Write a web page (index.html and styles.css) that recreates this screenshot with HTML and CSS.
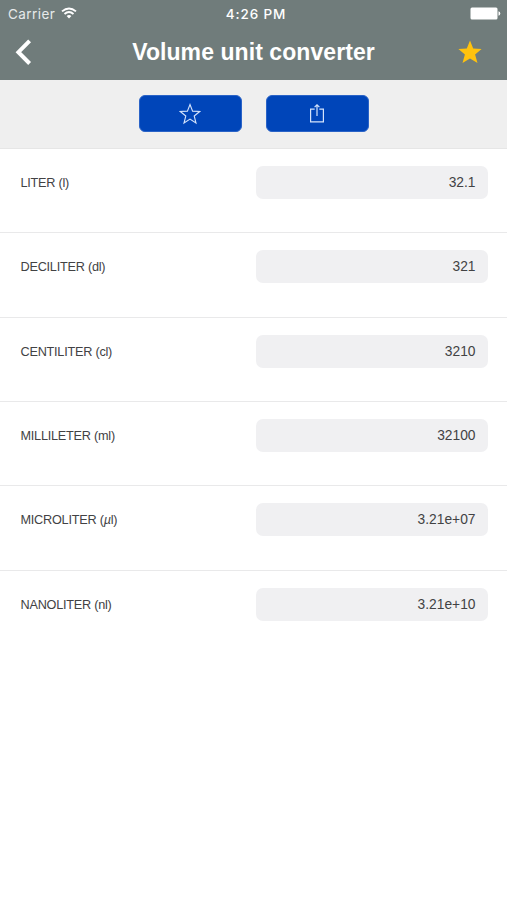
FILE: index.html
```html
<!DOCTYPE html>
<html lang="en">
<head>
<meta charset="utf-8">
<title>Volume unit converter</title>
<link rel="stylesheet" href="styles.css">
</head>
<body>
<header class="header">
  <div class="status">
    <div class="carrier"><span>Carrier</span>
      <svg class="wifi" width="16" height="12" viewBox="0 0 16 12" fill="none" stroke="#fff" stroke-width="1.9"><path d="M1 4.4Q8-1.6 15 4.4M3.5 7Q8 3.2 12.5 7"/><path d="M5.6 9Q8 7 10.4 9L8 11.5Z" fill="#fff" stroke="none"/></svg>
    </div>
    <time class="time">4:26 PM</time>
    <svg class="battery" width="31" height="13" viewBox="0 0 31 13" fill="#fff"><rect x=".5" y=".5" width="27" height="12" rx="1.5"/><path d="M28.5 4.3Q30.3 4.8 30.3 6.5T28.5 8.7Z"/></svg>
  </div>
  <nav class="nav">
    <svg class="back" width="18" height="28" viewBox="0 0 18 28" fill="none" stroke="#fff" stroke-width="4"><path d="M15.6 2.9L4.4 14.2L15.6 25.5"/></svg>
    <h1 class="title">Volume unit converter</h1>
    <svg class="favorite" width="24" height="24" viewBox="0 0 24 24" fill="#ffc20e"><path d="M12 .5L15.2 8.4L23.6 9L17.1 14.5L19.5 23L12 18.6L4.5 23L6.9 14.5L.4 9L8.8 8.4Z"/></svg>
  </nav>
</header>
<div class="toolbar">
  <button class="action" aria-label="Favorite"><svg width="22" height="22" viewBox="0 0 22 22" fill="none" stroke="#d4e3fb" stroke-width="1.1"><path d="M11 1.5L13.6 8.1L20.7 8.5L15.2 13L17 20L11 16.1L5 20L6.8 13L1.3 8.5L8.4 8.1Z"/></svg></button>
  <button class="action" aria-label="Share"><svg width="18" height="22" viewBox="0 0 18 22" fill="none" stroke="#d4e3fb" stroke-width="1.2"><path d="M6.7 6.2H2.6V18.8H15.4V6.2H11.3M9 13V2M6.6 4.2L9 1.8L11.4 4.2"/></svg></button>
</div>
<main class="units">
  <div class="row"><span class="label">LITER (l)</span><span class="value">32.1</span></div>
  <div class="row"><span class="label">DECILITER (dl)</span><span class="value">321</span></div>
  <div class="row"><span class="label">CENTILITER (cl)</span><span class="value">3210</span></div>
  <div class="row"><span class="label">MILLILETER (ml)</span><span class="value">32100</span></div>
  <div class="row"><span class="label">MICROLITER (<i class="mu">µ</i>l)</span><span class="value">3.21e+07</span></div>
  <div class="row"><span class="label">NANOLITER (nl)</span><span class="value">3.21e+10</span></div>
</main>
</body>
</html>
```
FILE: styles.css
```css
* { box-sizing: border-box; }
body {
  margin: 0;
  min-height: 900px;
  background: #fff;
  color: #424244;
  font-family: "Liberation Sans", Arial, sans-serif;
}
.header {
  height: 80px;
  background: #707c7b;
  color: #fff;
}
.status {
  display: grid;
  grid-template-columns: 1fr 70px 1fr;
  align-items: center;
  height: 27px;
  padding: 0 6px 0 8px;
  font-family: Inter, "Liberation Sans", sans-serif;
  font-size: 13.5px;
}
.carrier {
  display: flex;
  align-items: center;
  gap: 6px;
  color: #e6eaea;
  letter-spacing: .45px;
}
.wifi { margin-top: -1px; }
.time {
  padding-left: 3px;
  text-align: center;
  font-weight: 500;
  letter-spacing: .9px;
  white-space: nowrap;
}
.battery { justify-self: end; }
.nav {
  display: grid;
  grid-template-columns: 60px 1fr 60px;
  align-items: center;
  height: 50px;
}
.back { margin-left: 14px; }
.title {
  margin: 0;
  text-align: center;
  font-size: 23px;
  line-height: 28px;
  letter-spacing: .07px;
  white-space: nowrap;
}
.favorite { margin-left: 11px; }
.toolbar {
  display: flex;
  justify-content: center;
  gap: 24px;
  height: 69px;
  padding-top: 15px;
  background: #efefef;
  border-bottom: 1px solid #e6e6e6;
}
.action {
  display: flex;
  align-items: center;
  justify-content: center;
  width: 103px;
  height: 37px;
  padding: 0;
  border: 1px solid #2a63c7;
  border-radius: 6px;
  background: #0045b9;
}
.row {
  display: flex;
  justify-content: space-between;
  align-items: flex-start;
  height: 84.35px;
  padding: 17px 19px 0 20.5px;
  border-bottom: 1px solid #e9e9ea;
}
.row:last-child { border-bottom: 0; }
.label {
  font-size: 12.7px;
  line-height: 34px;
  letter-spacing: -.24px;
}
.mu { font-style: italic; }
.value {
  width: 232px;
  height: 33px;
  padding-right: 12.5px;
  border-radius: 7px;
  background: #f0f0f2;
  font-size: 13.8px;
  line-height: 33px;
  text-align: right;
}
```
